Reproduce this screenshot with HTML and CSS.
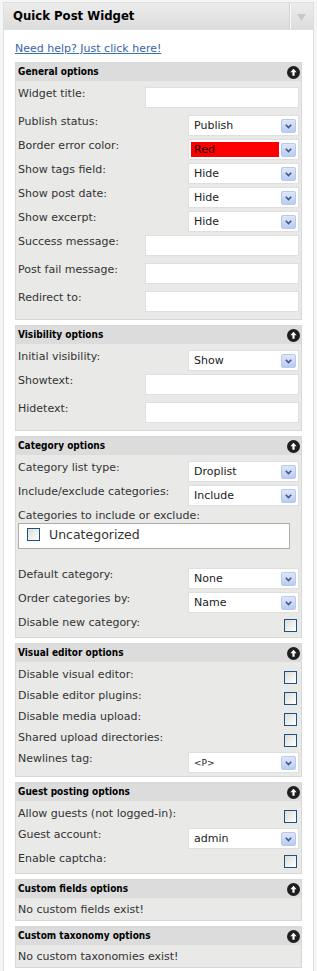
FILE: index.html
```html
<!doctype html>
<html lang="en">
  <head>
    <meta charset="UTF-8" />
    <title>Quick Post Widget</title>
    <link rel="stylesheet" href="styles.css">
  </head>
  <body>
    <div class="widget">
      <div class="widget-head">
        <h3 class="widget-title">Quick Post Widget</h3>
        <div class="widget-toggle">
          <svg width="9" height="7" viewBox="0 0 9 7"><path d="M0 0 H9 L4.5 7 Z" fill="#c8c8c8"/></svg>
        </div>
      </div>

      <div class="widget-inside">
        <a href="#" class="help-link">Need help? Just click here!</a>

        <!-- General -->
        <div class="box">
          <div class="box-head">
            <span>General options</span>
            <svg class="box-icon" width="13" height="13" viewBox="0 0 13 13"><circle cx="6.5" cy="6.5" r="6.5" fill="#1e1e1e"/><path d="M6.5 2.8 L9.6 6.3 H7.6 V9.8 H5.4 V6.3 H3.4 Z" fill="#fff"/></svg>
          </div>
          <div class="box-body">
            <div class="row text-row"><label>Widget title:</label><input class="field" type="text" /></div>
            <div class="row select-row"><label>Publish status:</label><div class="select"><span class="value">Publish</span><span class="arrow"><svg width="7" height="5" viewBox="0 0 7 5"><path d="M0.8 0.8 L3.5 3.6 L6.2 0.8" fill="none" stroke="#44587e" stroke-width="1.6"/></svg></span></div></div>
            <div class="row select-row"><label>Border error color:</label><div class="select"><span class="value value-red">Red</span><span class="arrow"><svg width="7" height="5" viewBox="0 0 7 5"><path d="M0.8 0.8 L3.5 3.6 L6.2 0.8" fill="none" stroke="#44587e" stroke-width="1.6"/></svg></span></div></div>
            <div class="row select-row"><label>Show tags field:</label><div class="select"><span class="value">Hide</span><span class="arrow"><svg width="7" height="5" viewBox="0 0 7 5"><path d="M0.8 0.8 L3.5 3.6 L6.2 0.8" fill="none" stroke="#44587e" stroke-width="1.6"/></svg></span></div></div>
            <div class="row select-row"><label>Show post date:</label><div class="select"><span class="value">Hide</span><span class="arrow"><svg width="7" height="5" viewBox="0 0 7 5"><path d="M0.8 0.8 L3.5 3.6 L6.2 0.8" fill="none" stroke="#44587e" stroke-width="1.6"/></svg></span></div></div>
            <div class="row select-row"><label>Show excerpt:</label><div class="select"><span class="value">Hide</span><span class="arrow"><svg width="7" height="5" viewBox="0 0 7 5"><path d="M0.8 0.8 L3.5 3.6 L6.2 0.8" fill="none" stroke="#44587e" stroke-width="1.6"/></svg></span></div></div>
            <div class="row text-row"><label>Success message:</label><input class="field" type="text" /></div>
            <div class="row text-row"><label>Post fail message:</label><input class="field" type="text" /></div>
            <div class="row text-row"><label>Redirect to:</label><input class="field" type="text" /></div>
          </div>
        </div>

        <!-- Visibility -->
        <div class="box">
          <div class="box-head">
            <span>Visibility options</span>
            <svg class="box-icon" width="13" height="13" viewBox="0 0 13 13"><circle cx="6.5" cy="6.5" r="6.5" fill="#1e1e1e"/><path d="M6.5 2.8 L9.6 6.3 H7.6 V9.8 H5.4 V6.3 H3.4 Z" fill="#fff"/></svg>
          </div>
          <div class="box-body">
            <div class="row select-row"><label>Initial visibility:</label><div class="select"><span class="value">Show</span><span class="arrow"><svg width="7" height="5" viewBox="0 0 7 5"><path d="M0.8 0.8 L3.5 3.6 L6.2 0.8" fill="none" stroke="#44587e" stroke-width="1.6"/></svg></span></div></div>
            <div class="row text-row"><label>Showtext:</label><input class="field" type="text" /></div>
            <div class="row text-row"><label>Hidetext:</label><input class="field" type="text" /></div>
          </div>
        </div>

        <!-- Category -->
        <div class="box">
          <div class="box-head">
            <span>Category options</span>
            <svg class="box-icon" width="13" height="13" viewBox="0 0 13 13"><circle cx="6.5" cy="6.5" r="6.5" fill="#1e1e1e"/><path d="M6.5 2.8 L9.6 6.3 H7.6 V9.8 H5.4 V6.3 H3.4 Z" fill="#fff"/></svg>
          </div>
          <div class="box-body">
            <div class="row select-row"><label>Category list type:</label><div class="select"><span class="value">Droplist</span><span class="arrow"><svg width="7" height="5" viewBox="0 0 7 5"><path d="M0.8 0.8 L3.5 3.6 L6.2 0.8" fill="none" stroke="#44587e" stroke-width="1.6"/></svg></span></div></div>
            <div class="row select-row"><label>Include/exclude categories:</label><div class="select"><span class="value">Include</span><span class="arrow"><svg width="7" height="5" viewBox="0 0 7 5"><path d="M0.8 0.8 L3.5 3.6 L6.2 0.8" fill="none" stroke="#44587e" stroke-width="1.6"/></svg></span></div></div>
            <div class="cat-label">Categories to include or exclude:</div>
            <div class="cat-list">
              <span class="check"></span>
              <span class="cat-name">Uncategorized</span>
            </div>
            <div class="row select-row"><label>Default category:</label><div class="select"><span class="value">None</span><span class="arrow"><svg width="7" height="5" viewBox="0 0 7 5"><path d="M0.8 0.8 L3.5 3.6 L6.2 0.8" fill="none" stroke="#44587e" stroke-width="1.6"/></svg></span></div></div>
            <div class="row select-row"><label>Order categories by:</label><div class="select"><span class="value">Name</span><span class="arrow"><svg width="7" height="5" viewBox="0 0 7 5"><path d="M0.8 0.8 L3.5 3.6 L6.2 0.8" fill="none" stroke="#44587e" stroke-width="1.6"/></svg></span></div></div>
            <div class="row check-row"><label>Disable new category:</label><span class="check"></span></div>
          </div>
        </div>

        <!-- Visual editor -->
        <div class="box">
          <div class="box-head">
            <span>Visual editor options</span>
            <svg class="box-icon" width="13" height="13" viewBox="0 0 13 13"><circle cx="6.5" cy="6.5" r="6.5" fill="#1e1e1e"/><path d="M6.5 2.8 L9.6 6.3 H7.6 V9.8 H5.4 V6.3 H3.4 Z" fill="#fff"/></svg>
          </div>
          <div class="box-body">
            <div class="row check-row"><label>Disable visual editor:</label><span class="check"></span></div>
            <div class="row check-row"><label>Disable editor plugins:</label><span class="check"></span></div>
            <div class="row check-row"><label>Disable media upload:</label><span class="check"></span></div>
            <div class="row check-row"><label>Shared upload directories:</label><span class="check"></span></div>
            <div class="row select-row"><label>Newlines tag:</label><div class="select"><span class="value value-small">&lt;P&gt;</span><span class="arrow"><svg width="7" height="5" viewBox="0 0 7 5"><path d="M0.8 0.8 L3.5 3.6 L6.2 0.8" fill="none" stroke="#44587e" stroke-width="1.6"/></svg></span></div></div>
          </div>
        </div>

        <!-- Guest posting -->
        <div class="box">
          <div class="box-head">
            <span>Guest posting options</span>
            <svg class="box-icon" width="13" height="13" viewBox="0 0 13 13"><circle cx="6.5" cy="6.5" r="6.5" fill="#1e1e1e"/><path d="M6.5 2.8 L9.6 6.3 H7.6 V9.8 H5.4 V6.3 H3.4 Z" fill="#fff"/></svg>
          </div>
          <div class="box-body">
            <div class="row check-row"><label>Allow guests (not logged-in):</label><span class="check"></span></div>
            <div class="row select-row"><label>Guest account:</label><div class="select"><span class="value">admin</span><span class="arrow"><svg width="7" height="5" viewBox="0 0 7 5"><path d="M0.8 0.8 L3.5 3.6 L6.2 0.8" fill="none" stroke="#44587e" stroke-width="1.6"/></svg></span></div></div>
            <div class="row check-row"><label>Enable captcha:</label><span class="check"></span></div>
          </div>
        </div>

        <!-- Custom fields -->
        <div class="box">
          <div class="box-head">
            <span>Custom fields options</span>
            <svg class="box-icon" width="13" height="13" viewBox="0 0 13 13"><circle cx="6.5" cy="6.5" r="6.5" fill="#1e1e1e"/><path d="M6.5 2.8 L9.6 6.3 H7.6 V9.8 H5.4 V6.3 H3.4 Z" fill="#fff"/></svg>
          </div>
          <div class="box-body box-note">No custom fields exist!</div>
        </div>

        <!-- Custom taxonomy -->
        <div class="box">
          <div class="box-head">
            <span>Custom taxonomy options</span>
            <svg class="box-icon" width="13" height="13" viewBox="0 0 13 13"><circle cx="6.5" cy="6.5" r="6.5" fill="#1e1e1e"/><path d="M6.5 2.8 L9.6 6.3 H7.6 V9.8 H5.4 V6.3 H3.4 Z" fill="#fff"/></svg>
          </div>
          <div class="box-body box-note">No custom taxonomies exist!</div>
        </div>
      </div>
    </div>
  </body>
</html>
```

FILE: styles.css
```css
* {
  margin: 0;
  padding: 0;
  box-sizing: border-box;
}

body {
  font-family: "DejaVu Sans", Verdana, sans-serif;
  font-size: 11px;
  color: #333;
  background: #f5f5f5;
}

.widget {
  margin: 2px 3px 0 3px;
  border: 1px solid #dfdfdf;
  background: #fff;
}

/* title bar */
.widget-head {
  display: flex;
  height: 27px;
  border-bottom: 1px solid #dfdfdf;
  background: linear-gradient(#ececec, #dcdcdc);
}

.widget-title {
  flex: 1;
  padding-left: 9px;
  font-family: "DejaVu Sans Condensed", "DejaVu Sans", sans-serif;
  font-stretch: condensed;
  font-size: 13px;
  font-weight: bold;
  line-height: 26px;
  color: #000;
}

.widget-toggle {
  width: 24px;
  display: flex;
  justify-content: center;
  padding-top: 11px;
  border-left: 1px solid #d2d2d2;
  box-shadow: inset 1px 0 #fafafa;
}

.widget-inside {
  padding: 12px 11px 0 11px;
}

.help-link {
  display: block;
  width: max-content;
  line-height: 14px;
  margin-bottom: 6px;
  color: #3a63a8;
  text-decoration: underline;
  text-decoration-color: #2a7ab5;
}

/* option boxes */
.box {
  border: 1px solid #d8d8d8;
  background: #e9e9e7;
  margin-bottom: 5px;
}

.box-head {
  display: flex;
  align-items: center;
  justify-content: space-between;
  height: 18px;
  padding: 0 1px 0 2px;
  background: #dcdcdc;
  font-family: "DejaVu Sans Condensed", "DejaVu Sans", sans-serif;
  font-stretch: condensed;
  font-size: 10px;
  font-weight: bold;
  line-height: 18px;
  color: #000;
}

.box-icon {
  display: block;
}

.box-body {
  padding: 6px 2px 0 2px;
}

.box-note {
  padding: 5px 2px 3px 2px;
  line-height: 14px;
}

.row {
  display: flex;
  justify-content: space-between;
  align-items: flex-start;
}

.row label {
  line-height: 14px;
}

.text-row {
  height: 28px;
}

.select-row {
  height: 24px;
}

.check-row {
  height: 21px;
}

.field {
  width: 154px;
  height: 21px;
  border: 1px solid #dfdfdf;
  background: #fff;
  outline: none;
}

/* fake select box */
.select {
  display: flex;
  align-items: flex-end;
  width: 111px;
  height: 21px;
  padding: 2px;
  border: 1px solid #dfdfdf;
  background: #fff;
}

.value {
  flex: 1;
  height: 15px;
  margin-right: 2px;
  padding-left: 3px;
  line-height: 16px;
  color: #222;
}

.value-red {
  background: #ff0000;
  color: #1a0000;
}

.value-small {
  font-size: 9px;
}

.arrow {
  display: flex;
  align-items: center;
  justify-content: center;
  width: 15px;
  height: 14px;
  border: 1px solid #b7c9ec;
  border-radius: 2px;
  background: linear-gradient(#dde7fb, #b9ccf2);
}

.arrow svg {
  display: block;
}

.check {
  display: block;
  width: 13px;
  height: 13px;
  margin: 3px 2px 0 0;
  border: 1px solid #1c5180;
  background: linear-gradient(135deg, #dcdcd7, #ffffff);
}

/* category list */
.cat-label {
  height: 14px;
  line-height: 14px;
}

.cat-list {
  display: flex;
  align-items: center;
  width: 272px;
  height: 26px;
  margin-bottom: 19px;
  padding: 0 7px 3px 8px;
  border: 1px solid #adadad;
  background: #fff;
}

.cat-list .check {
  margin: 0 9px 0 0;
}

.cat-name {
  font-size: 12.5px;
  line-height: 15px;
  color: #333;
}
```
